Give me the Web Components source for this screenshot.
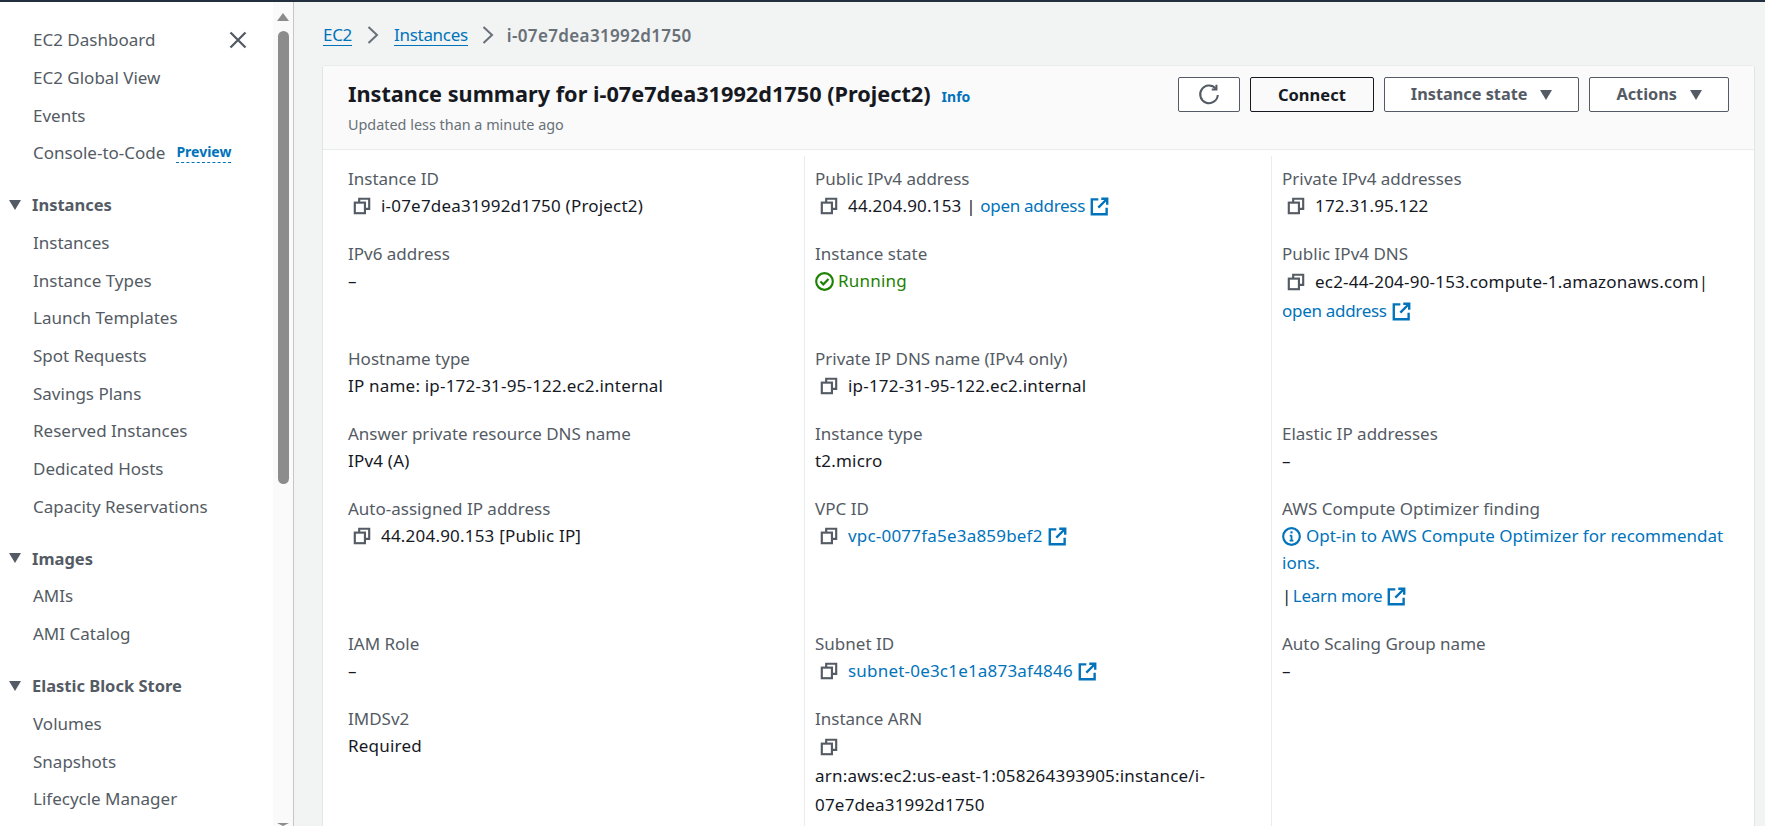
<!DOCTYPE html>
<html lang="en">
<head>
<meta charset="utf-8">
<title>Instance summary</title>
<style>
    html, body { margin: 0; height: 100%; overflow: hidden; }
    body { font: 17px/27px "Noto Sans", "Open Sans", sans-serif; color: #16191f; background: #f2f3f3; }
    a { color: #0073bb; text-decoration: none; }
</style>
</head>
<body>
<aws-console>
    <aws-sidebar slot="side">
        <aws-nav-item>EC2 Dashboard<aws-icon slot="end" name="close" size="20"></aws-icon></aws-nav-item>
        <aws-nav-item>EC2 Global View</aws-nav-item>
        <aws-nav-item>Events</aws-nav-item>
        <aws-nav-item>Console-to-Code<aws-preview slot="badge">Preview</aws-preview></aws-nav-item>
        <aws-nav-section label="Instances">
            <aws-nav-item>Instances</aws-nav-item>
            <aws-nav-item>Instance Types</aws-nav-item>
            <aws-nav-item>Launch Templates</aws-nav-item>
            <aws-nav-item>Spot Requests</aws-nav-item>
            <aws-nav-item>Savings Plans</aws-nav-item>
            <aws-nav-item>Reserved Instances</aws-nav-item>
            <aws-nav-item>Dedicated Hosts</aws-nav-item>
            <aws-nav-item>Capacity Reservations</aws-nav-item>
        </aws-nav-section>
        <aws-nav-section label="Images">
            <aws-nav-item>AMIs</aws-nav-item>
            <aws-nav-item>AMI Catalog</aws-nav-item>
        </aws-nav-section>
        <aws-nav-section label="Elastic Block Store">
            <aws-nav-item>Volumes</aws-nav-item>
            <aws-nav-item>Snapshots</aws-nav-item>
            <aws-nav-item>Lifecycle Manager</aws-nav-item>
        </aws-nav-section>
    </aws-sidebar>

    <aws-breadcrumbs>
        <a href="#">EC2</a>
        <a href="#">Instances</a>
        <span>i-07e7dea31992d1750</span>
    </aws-breadcrumbs>

    <aws-summary-card>
        <span slot="title">Instance summary for i-07e7dea31992d1750 (Project2)</span>
        <span slot="subtitle">Updated less than a minute ago</span>
        <aws-button slot="actions" variant="icon"><aws-icon name="refresh" size="22"></aws-icon></aws-button>
        <aws-button slot="actions" variant="strong">Connect</aws-button>
        <aws-button slot="actions" caret>Instance state</aws-button>
        <aws-button slot="actions" caret>Actions</aws-button>

        <aws-field label="Instance ID"><aws-copy>i-07e7dea31992d1750 (Project2)</aws-copy></aws-field>
        <aws-field label="Public IPv4 address"><aws-copy>44.204.90.153 | <aws-link tight>open address</aws-link></aws-copy></aws-field>
        <aws-field label="Private IPv4 addresses"><aws-copy>172.31.95.122</aws-copy></aws-field>

        <aws-field label="IPv6 address">–</aws-field>
        <aws-field label="Instance state"><aws-status>Running</aws-status></aws-field>
        <aws-field label="Public IPv4 DNS" wrapped><aws-copy>ec2-44-204-90-153.compute-1.amazonaws.com| <aws-link tight>open address</aws-link></aws-copy></aws-field>

        <aws-field label="Hostname type">IP name: ip-172-31-95-122.ec2.internal</aws-field>
        <aws-field label="Private IP DNS name (IPv4 only)"><aws-copy>ip-172-31-95-122.ec2.internal</aws-copy></aws-field>
        <aws-field></aws-field>

        <aws-field label="Answer private resource DNS name">IPv4 (A)</aws-field>
        <aws-field label="Instance type">t2.micro</aws-field>
        <aws-field label="Elastic IP addresses">–</aws-field>

        <aws-field label="Auto-assigned IP address"><aws-copy>44.204.90.153 [Public IP]</aws-copy></aws-field>
        <aws-field label="VPC ID"><aws-copy><aws-link>vpc-0077fa5e3a859bef2</aws-link></aws-copy></aws-field>
        <aws-field label="AWS Compute Optimizer finding"><aws-optimizer></aws-optimizer></aws-field>

        <aws-field label="IAM Role">–</aws-field>
        <aws-field label="Subnet ID"><aws-copy><aws-link>subnet-0e3c1e1a873af4846</aws-link></aws-copy></aws-field>
        <aws-field label="Auto Scaling Group name">–</aws-field>

        <aws-field label="IMDSv2">Required</aws-field>
        <aws-field label="Instance ARN" wrapped><aws-copy block>arn:aws:ec2:us-east-1:058264393905:instance/i-07e7dea31992d1750</aws-copy></aws-field>
        <aws-field></aws-field>
    </aws-summary-card>
</aws-console>

<script>
(function() {
    const icons = {
        close: `<path d="M2 2l12 12M14 2L2 14" fill="none" stroke="currentColor" stroke-width="1.8"/>`,
        refresh: `<path d="M12.9 3.4A6.4 6.4 0 1 0 14.4 8" fill="none" stroke="currentColor" stroke-width="1.5"/><path d="M13.4 .6v3.4H10" fill="none" stroke="currentColor" stroke-width="1.5"/>`,
        copy: `<path d="M5.5 4.5V1.6h8.9v8.9h-2.9" fill="none" stroke="currentColor" stroke-width="1.9"/><rect x="1.6" y="5" width="9" height="9.4" fill="none" stroke="currentColor" stroke-width="1.9"/>`,
        external: `<path d="M7 2H1.5v12.5H14V9" fill="none" stroke="currentColor" stroke-width="2"/><path d="M9.5 1.5h5v5M14.5 1.5L7 9" fill="none" stroke="currentColor" stroke-width="2"/>`,
        check: `<circle cx="8" cy="8" r="7" fill="none" stroke="currentColor" stroke-width="1.8"/><path d="M4.6 8l2.4 2.4 4.4-4.6" fill="none" stroke="currentColor" stroke-width="1.8"/>`,
        info: `<circle cx="8" cy="8" r="7" fill="none" stroke="currentColor" stroke-width="1.8"/><path d="M8 7v4.4M6.5 7.2H8M6.4 11.4h3.2" fill="none" stroke="currentColor" stroke-width="1.5"/><rect x="7.1" y="3.6" width="1.8" height="1.8" fill="currentColor"/>`
    }

    class AwsIcon extends HTMLElement {
        constructor() {
            super();
            const size = this.getAttribute("size") || 16
            this.attachShadow({mode: "open"}).innerHTML = `
<style>
    :host { display: inline-flex; vertical-align: -3px; }
    svg { display: block; }
</style>
<svg width="${size}" height="${size}" viewBox="0 0 16 16">${icons[this.getAttribute("name")]}</svg>`
        }
    }
    customElements.define("aws-icon", AwsIcon)

    const consoleTemplate = document.createElement("template")
    consoleTemplate.innerHTML = `
<style>
    :host { display: flex; flex-direction: column; height: 100vh; border-top: 2px solid #232f3e; box-sizing: border-box; overflow: hidden; }
    .body { display: flex; flex: 1; min-height: 0; }
    main { flex: 1; min-width: 0; padding: 0 11px 0 29px; }
</style>
<div class="body">
    <slot name="side"></slot>
    <main><slot></slot></main>
</div>`
    class AwsConsole extends HTMLElement {
        constructor() {
            super();
            this.attachShadow({mode: "open"})
            this.shadowRoot.appendChild(consoleTemplate.content.cloneNode(true))
        }
    }
    customElements.define("aws-console", AwsConsole)

    const sidebarTemplate = document.createElement("template")
    sidebarTemplate.innerHTML = `
<style>
    :host { display: flex; flex: none; width: 294px; box-sizing: border-box; background: #fff; border-right: 1px solid #c6c6c6; color: #545b64; overflow: hidden; }
    nav { flex: 1; min-width: 0; padding-top: 19px; }
    .track { flex: none; width: 20px; background: #fafafa; display: flex; flex-direction: column; align-items: center; padding-top: 11px; box-sizing: border-box; }
    .up { width: 0; height: 0; border: 6px solid transparent; border-top: 0; border-bottom: 8px solid #8c8c8c; }
    .thumb { width: 11px; height: 453px; margin-top: 10px; border-radius: 6px; background: #8c8c8c; }
    .down { width: 0; height: 0; margin-top: auto; border: 6px solid transparent; border-bottom: 0; border-top: 3px solid #8c8c8c; }
</style>
<nav><slot></slot></nav>
<div class="track"><div class="up"></div><div class="thumb"></div><div class="down"></div></div>`
    class AwsSidebar extends HTMLElement {
        constructor() {
            super();
            this.attachShadow({mode: "open"})
            this.shadowRoot.appendChild(sidebarTemplate.content.cloneNode(true))
        }
    }
    customElements.define("aws-sidebar", AwsSidebar)

    const navItemTemplate = document.createElement("template")
    navItemTemplate.innerHTML = `
<style>
    :host { display: flex; align-items: center; height: 37.65px; padding: 0 25px 0 33px; color: #545b64; white-space: nowrap; }
    .badge { display: inline-flex; margin-left: 11px; }
    .end { margin-left: auto; display: inline-flex; }
</style>
<slot></slot><span class="badge"><slot name="badge"></slot></span><span class="end"><slot name="end"></slot></span>`
    class AwsNavItem extends HTMLElement {
        constructor() {
            super();
            this.attachShadow({mode: "open"})
            this.shadowRoot.appendChild(navItemTemplate.content.cloneNode(true))
        }
    }
    customElements.define("aws-nav-item", AwsNavItem)

    class AwsPreview extends HTMLElement {
        constructor() {
            super();
            this.attachShadow({mode: "open"}).innerHTML = `
<style>
    :host { display: inline-block; font-size: 14px; font-weight: 700; line-height: 20px; color: #0073bb; border-bottom: 1px dashed #0073bb; }
</style>
<slot></slot>`
        }
    }
    customElements.define("aws-preview", AwsPreview)

    const navSectionTemplate = document.createElement("template")
    navSectionTemplate.innerHTML = `
<style>
    :host { display: block; margin-top: 14.6px; }
    .head { display: flex; align-items: center; height: 37.65px; font-weight: 700; font-size: 16.5px; color: #545b64; white-space: nowrap; }
    .caret { width: 0; height: 0; margin: 0 11px 0 9px; border: 6px solid transparent; border-bottom: 0; border-top: 10px solid #545b64; }
</style>
<div class="head"><span class="caret"></span><span class="label"></span></div>
<slot></slot>`
    class AwsNavSection extends HTMLElement {
        constructor() {
            super();
            this.attachShadow({mode: "open"})
            this.shadowRoot.appendChild(navSectionTemplate.content.cloneNode(true))
            this.shadowRoot.querySelector(".label").textContent = this.getAttribute("label")
        }
    }
    customElements.define("aws-nav-section", AwsNavSection)

    const breadcrumbsTemplate = document.createElement("template")
    breadcrumbsTemplate.innerHTML = `
<style>
    :host { display: flex; align-items: center; height: 64px; box-sizing: border-box; padding-top: 2px; color: #687078; white-space: nowrap; }
    ::slotted(a) { color: #0073bb; border-bottom: 1px solid #0073bb; line-height: 21px; letter-spacing: -.3px; }
    ::slotted(span) { font-weight: 600; letter-spacing: .35px; }
    svg { margin: 0 15px; flex: none; }
    svg.last { margin: 0 13px 0 14px; }
</style>
<slot name="c0"></slot><svg width="12" height="18" viewBox="0 0 12 18"><path d="M1.5 1l8.5 8-8.5 8" fill="none" stroke="#687078" stroke-width="2"/></svg><slot name="c1"></slot><svg class="last" width="12" height="18" viewBox="0 0 12 18"><path d="M1.5 1l8.5 8-8.5 8" fill="none" stroke="#687078" stroke-width="2"/></svg><slot name="c2"></slot>`
    class AwsBreadcrumbs extends HTMLElement {
        constructor() {
            super();
            this.attachShadow({mode: "open"})
            this.shadowRoot.appendChild(breadcrumbsTemplate.content.cloneNode(true))
            Array.from(this.children).forEach((c, i) => c.slot = "c" + i)
        }
    }
    customElements.define("aws-breadcrumbs", AwsBreadcrumbs)

    const buttonTemplate = document.createElement("template")
    buttonTemplate.innerHTML = `
<style>
    :host { display: inline-flex; align-items: center; justify-content: center; height: 35px; box-sizing: border-box; border: 1px solid #545b64; border-radius: 2px; background: #fff; color: #545b64; font-size: 16.3px; font-weight: 700; padding: 0 26px; white-space: nowrap; }
    :host([variant="strong"]) { background: #fafafa; color: #16191f; border-color: #16191f; font-size: 16.5px; padding: 0 27px; }
    :host([variant="icon"]) { padding: 0; width: 62px; }
    .caret { display: none; width: 0; height: 0; margin-left: 13px; border: 6.5px solid transparent; border-bottom: 0; border-top: 10px solid #545b64; }
    :host([caret]) .caret { display: block; }
</style>
<slot></slot><span class="caret"></span>`
    class AwsButton extends HTMLElement {
        constructor() {
            super();
            this.attachShadow({mode: "open"})
            this.shadowRoot.appendChild(buttonTemplate.content.cloneNode(true))
        }
    }
    customElements.define("aws-button", AwsButton)

    const cardTemplate = document.createElement("template")
    cardTemplate.innerHTML = `
<style>
    :host { display: block; background: #fff; box-shadow: 0 1px 1px rgba(0,28,36,.2), 0 0 1px rgba(0,28,36,.2); }
    header { display: flex; justify-content: space-between; height: 84px; box-sizing: border-box; padding: 12px 25px 0; background: #fafafa; border-bottom: 1px solid #eaeded; }
    h2 { margin: 1px 0 0; font-size: 21.7px; line-height: 30px; font-weight: 700; color: #16191f; white-space: nowrap; }
    h2 a { font-size: 14px; font-weight: 700; margin-left: 11px; color: #0073bb; text-decoration: none; }
    p { margin: 2px 0 0; font-size: 14.4px; line-height: 22px; color: #687078; }
    .actions { display: flex; gap: 10px; height: 35px; margin-top: -1px; }
    .grid { display: grid; grid-template-columns: 481px 467px 1fr; margin-top: 6px; }
    ::slotted(aws-field:not(:nth-child(3n+1))) { border-left: 1px solid #eaeded; padding-left: 10px; }
    ::slotted(aws-field:nth-child(3n+1)) { padding-left: 25px; }
</style>
<header>
    <div>
        <h2><slot name="title"></slot><a href="#">Info</a></h2>
        <p><slot name="subtitle"></slot></p>
    </div>
    <div class="actions"><slot name="actions"></slot></div>
</header>
<div class="grid"><slot></slot></div>`
    class AwsSummaryCard extends HTMLElement {
        constructor() {
            super();
            this.attachShadow({mode: "open"})
            this.shadowRoot.appendChild(cardTemplate.content.cloneNode(true))
        }
    }
    customElements.define("aws-summary-card", AwsSummaryCard)

    const fieldTemplate = document.createElement("template")
    fieldTemplate.innerHTML = `
<style>
    :host { display: block; padding: 9px 24px 12px 0; min-width: 0; }
    :host([wrapped]) { line-height: 29px; padding-bottom: 11px; }
    .label { color: #545b64; line-height: 27px; }
    .label:empty { display: none; }
    .value { color: #16191f; letter-spacing: .2px; }
</style>
<div class="label"></div>
<div class="value"><slot></slot></div>`
    class AwsField extends HTMLElement {
        constructor() {
            super();
            this.attachShadow({mode: "open"})
            this.shadowRoot.appendChild(fieldTemplate.content.cloneNode(true))
            this.shadowRoot.querySelector(".label").textContent = this.getAttribute("label") || ""
        }
    }
    customElements.define("aws-field", AwsField)

    class AwsCopy extends HTMLElement {
        constructor() {
            super();
            this.attachShadow({mode: "open"}).innerHTML = `
<style>
    :host { display: inline; }
    .icon { display: inline-block; margin: 0 10px 0 5px; color: #545b64; }
    :host([block]) .text { display: inline-block; }
</style>
<span class="icon"><aws-icon name="copy" size="18"></aws-icon></span><span class="text"><slot></slot></span>`
        }
    }
    customElements.define("aws-copy", AwsCopy)

    // no whitespace before the slot here, it would show up as a space in the inline flow
    class AwsLink extends HTMLElement {
        constructor() {
            super();
            this.attachShadow({mode: "open"}).innerHTML = `<style>
    :host { display: inline; color: #0073bb; white-space: nowrap; }
    :host([tight]) { letter-spacing: -.3px; }
    aws-icon { margin-left: 1px; vertical-align: -4px; }
</style><slot></slot> <aws-icon name="external" size="19"></aws-icon>`
        }
    }
    customElements.define("aws-link", AwsLink)

    class AwsStatus extends HTMLElement {
        constructor() {
            super();
            this.attachShadow({mode: "open"}).innerHTML = `
<style>
    :host { display: inline; color: #1d8102; }
    aws-icon { margin-right: 4px; vertical-align: -4px; }
</style>
<aws-icon name="check" size="19"></aws-icon><slot></slot>`
        }
    }
    customElements.define("aws-status", AwsStatus)

    class AwsOptimizer extends HTMLElement {
        constructor() {
            super();
            this.attachShadow({mode: "open"}).innerHTML = `
<style>
    :host { display: block; color: #0073bb; letter-spacing: 0; }
    .msg { word-break: break-all; margin-right: 4px; }
    aws-icon { margin-right: 5px; vertical-align: -4px; }
    .more { margin-top: 6px; color: #16191f; }
    .more aws-link { margin-left: -3px; }
</style>
<div class="msg"><aws-icon name="info" size="19"></aws-icon>Opt-in to AWS Compute Optimizer for recommendations.</div>
<div class="more">| <aws-link tight>Learn more</aws-link></div>`
        }
    }
    customElements.define("aws-optimizer", AwsOptimizer)
})()
</script>
</body>
</html>
